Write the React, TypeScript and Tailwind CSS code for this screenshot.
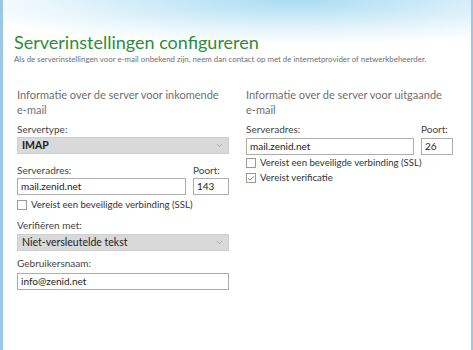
import { ChevronDown, Check } from "lucide-react";

const font = { fontFamily: 'Lato, "Open Sans", sans-serif' };

function Label({ children }: { children: React.ReactNode }) {
  return <div className="text-[10px] leading-[14px] text-[#444]">{children}</div>;
}

function Input({ value, className = "" }: { value: string; className?: string }) {
  return (
    <div
      className={`h-[17px] border border-[#adadad] bg-white px-[3px] text-[10px] leading-[15px] text-[#222] ${className}`}
    >
      {value}
    </div>
  );
}

function Select({ value, bold }: { value: string; bold?: boolean }) {
  return (
    <div className="flex h-[17px] items-center justify-between border border-[#cfcfcf] bg-[#d9d9d9] px-[4px] text-[10.5px] text-[#222]">
      <span className={bold ? "font-bold" : ""}>{value}</span>
      <ChevronDown size={9} strokeWidth={1.5} className="text-[#8a8a8a]" />
    </div>
  );
}

function CheckRow({ label, checked }: { label: string; checked?: boolean }) {
  return (
    <div className="flex items-center gap-[4px] text-[9.6px] leading-[14px] text-[#333]">
      <span className="flex h-[10px] w-[10px] items-center justify-center border border-[#9a9a9a] bg-white">
        {checked && <Check size={9} strokeWidth={2.5} className="text-[#3f8f2a]" />}
      </span>
      {label}
    </div>
  );
}

function Heading({ lines }: { lines: string[] }) {
  return (
    <div className="mb-[5px] text-[11px] leading-[15px] text-[#6f6f6f]">
      {lines.map((l) => (
        <div key={l} className="whitespace-nowrap">{l}</div>
      ))}
    </div>
  );
}

export default function App() {
  return (
    <div
      style={font}
      className="relative h-[350px] w-[473px] overflow-hidden border-l-[3px] border-r-[2px] border-[#9ec6e6] bg-[radial-gradient(ellipse_75%_45px_at_62%_0%,#a9dcf3,#e9f6fc_70%,#ffffff)]"
    >
      <div className="pl-[11px] pt-[31px]">
        <h1 className="text-[18px] leading-[22px] text-[#2e8b3c]">Serverinstellingen configureren</h1>
        <p className="whitespace-nowrap text-[7.9px] leading-[12px] text-[#707070]">
          Als de serverinstellingen voor e-mail onbekend zijn, neem dan contact op met de internetprovider of netwerkbeheerder.
        </p>
      </div>

      <div className="mt-[22px] flex gap-[17px] pl-[14px]">
        <div className="w-[212px]">
          <Heading lines={["Informatie over de server voor inkomende", "e-mail"]} />
          <Label>Servertype:</Label>
          <div className="mt-[1px]">
            <Select value="IMAP" bold />
          </div>
          <div className="mt-[9px] flex gap-[7px]">
            <div className="flex-1">
              <Label>Serveradres:</Label>
              <Input value="mail.zenid.net" className="mt-[1px]" />
            </div>
            <div className="w-[36px]">
              <Label>Poort:</Label>
              <Input value="143" className="mt-[1px]" />
            </div>
          </div>
          <div className="mt-[3px]">
            <CheckRow label="Vereist een beveiligde verbinding (SSL)" />
          </div>
          <div className="mt-[6px]">
            <Label>Verifiëren met:</Label>
          </div>
          <div className="mt-[2px]">
            <Select value="Niet-versleutelde tekst" />
          </div>
          <div className="mt-[5px]">
            <Label>Gebruikersnaam:</Label>
          </div>
          <Input value="info@zenid.net" className="mt-[3px]" />
        </div>

        <div className="w-[207px]">
          <Heading lines={["Informatie over de server voor uitgaande", "e-mail"]} />
          <div className="flex gap-[7px]">
            <div className="flex-1">
              <Label>Serveradres:</Label>
              <Input value="mail.zenid.net" className="mt-[2px]" />
            </div>
            <div className="w-[32px]">
              <Label>Poort:</Label>
              <Input value="26" className="mt-[2px]" />
            </div>
          </div>
          <div className="mt-[1px] flex flex-col gap-[1px]">
            <CheckRow label="Vereist een beveiligde verbinding (SSL)" />
            <CheckRow label="Vereist verificatie" checked />
          </div>
        </div>
      </div>
    </div>
  );
}
